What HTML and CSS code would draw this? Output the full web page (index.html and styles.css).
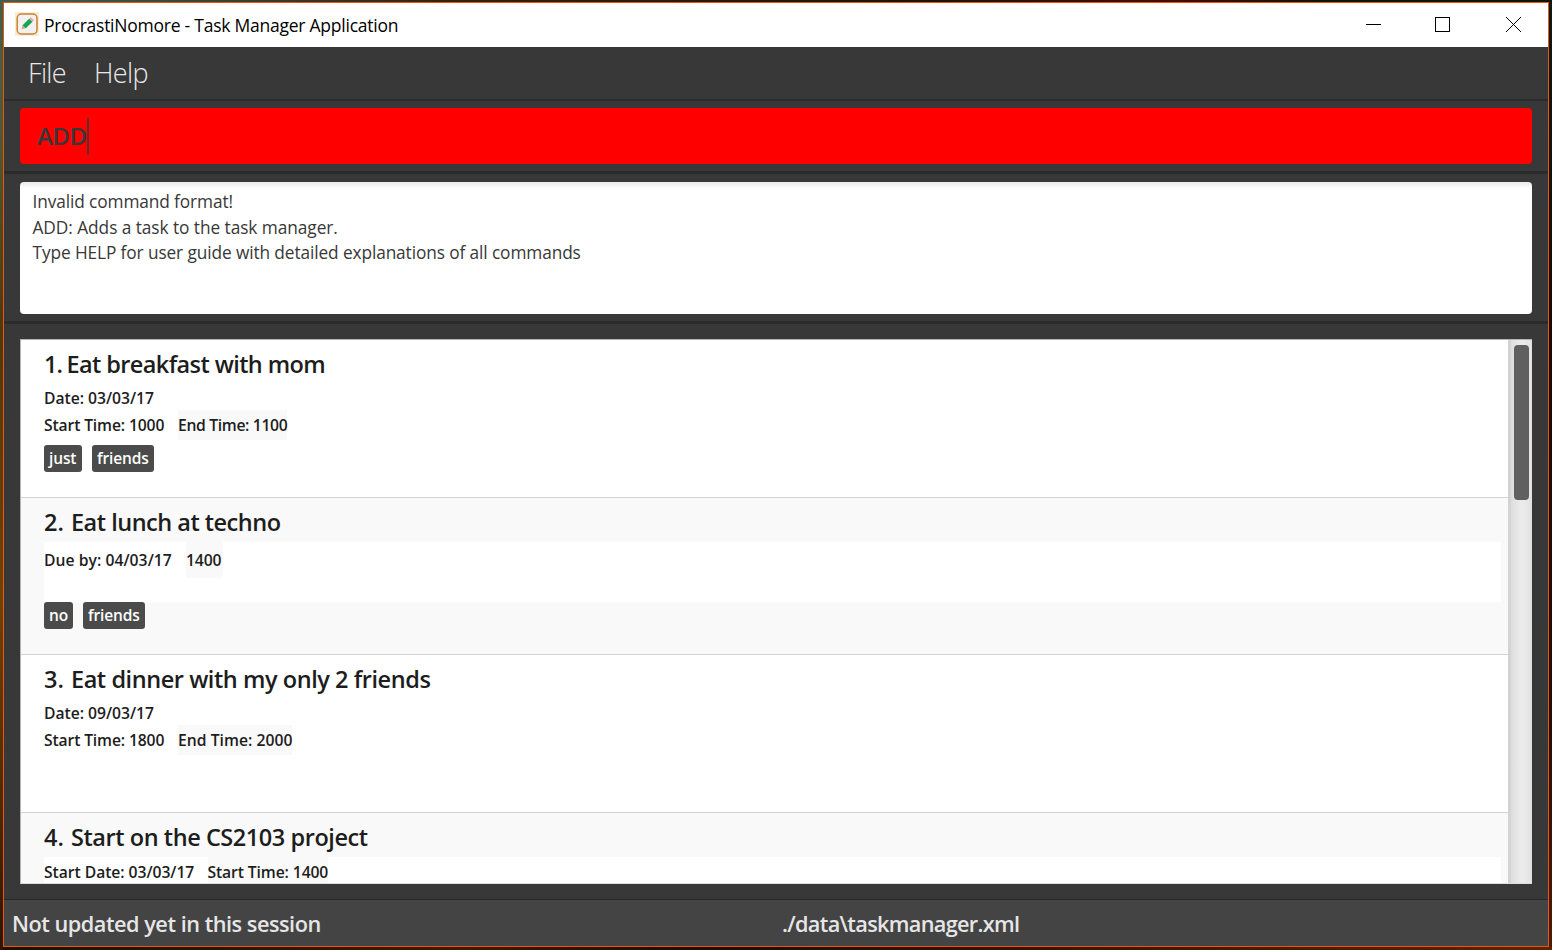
FILE: index.html
```html
<!DOCTYPE html>
<html lang="en">
<head>
<meta charset="utf-8">
<title>ProcrastiNomore - Task Manager Application</title>
<link rel="stylesheet" href="styles.css">
</head>
<body>
<div class="window">
  <header class="titlebar">
    <svg class="app-icon" width="24" height="24" viewBox="0 0 24 24">
      <rect width="24" height="24" fill="#fdecd2"/>
      <rect x="2.2" y="2" width="19.8" height="20" rx="4" fill="#f3f1ef" stroke="#cb7f37" stroke-width="1.5"/>
      <path d="M6.500 17.300 7.500 13.200 10.800 16.200Z" fill="#d9a878"/>
      <path d="M7.500 13.200 14.200 6.800 17.500 9.800 10.800 16.200Z" fill="#12a552"/>
      <path d="M14.200 6.800 15.800 5.300 19 8.300 17.500 9.800Z" fill="#f3a5a0"/>
    </svg>
    <span class="app-title">ProcrastiNomore - Task Manager Application</span>
    <svg class="controls" width="160" height="20" viewBox="0 0 160 20" fill="none" stroke="#000" shape-rendering="crispEdges">
      <path d="M0 9.500H15"/>
      <rect x="69.500" y="2.500" width="14" height="14"/>
      <path d="M140 2 155 17M155 2 140 17" shape-rendering="auto"/>
    </svg>
  </header>
  <nav class="menubar"><span class="menu-item">File</span><span class="menu-item">Help</span></nav>
  <section class="command-pane">
    <div class="command-box"><span class="command-text">ADD</span><span class="caret"></span></div>
  </section>
  <section class="result-pane">
    <div class="result-box">
      <p>Invalid command format!</p>
      <p class="usage">ADD: Adds a task to the task manager.</p>
      <p>Type HELP for user guide with detailed explanations of all commands</p>
    </div>
  </section>
  <section class="list-pane">
    <div class="list">
      <div class="rows">
        <article class="task">
          <h2 class="name name-tight"><span class="num">1. </span>Eat breakfast with mom</h2>
          <div class="details">
            <div class="line date"><span>Date: 03/03/17</span></div>
            <div class="line time"><span class="start">Start Time: 1000</span><span class="shade end">End Time: 1100</span></div>
          </div>
          <div class="tags"><span class="tag tag-just">just</span><span class="tag">friends</span></div>
        </article>
        <article class="task alt">
          <h2 class="name name-snug"><span class="num">2. </span>Eat lunch at techno</h2>
          <div class="details">
            <div class="line due"><span class="due-date">Due by: 04/03/17</span><span class="shade due-time">1400</span></div>
          </div>
          <div class="tags"><span class="tag">no</span><span class="tag">friends</span></div>
        </article>
        <article class="task">
          <h2 class="name"><span class="num">3. </span>Eat dinner with my only 2 friends</h2>
          <div class="details">
            <div class="line date"><span>Date: 09/03/17</span></div>
            <div class="line time"><span class="start">Start Time: 1800</span><span class="shade end-wide">End Time: 2000</span></div>
          </div>
        </article>
        <article class="task alt">
          <h2 class="name"><span class="num">4. </span>Start on the CS2103 project</h2>
          <div class="details">
            <div class="line time"><span class="start-date">Start Date: 03/03/17</span><span class="shade start-time">Start Time: 1400</span></div>
          </div>
        </article>
      </div>
      <div class="scrollbar"><div class="thumb"></div></div>
    </div>
  </section>
  <footer class="statusbar"><span class="sync">Not updated yet in this session</span><span class="path">./data\taskmanager.xml</span></footer>
</div>
</body>
</html>
```
FILE: styles.css
```css
* { box-sizing: border-box; }
body {
  margin: 0;
  height: 950px;
  padding: 2px 3px 3px 3px;
  overflow: hidden;
  font-family: "Open Sans", "Noto Sans", sans-serif;
  background:
    linear-gradient(#40604f 0, #4a5a36 140px, #4a3a10 330px, #6b4306 600px, #4a2c05 800px, #2a1802 950px) left / 3px 100% no-repeat,
    linear-gradient(90deg, #1a1202, #3a1a02 30%, #1c0d05 45%, #381602 70%, #5a2400) bottom / 100% 3px no-repeat,
    linear-gradient(90deg, #40604f, #35200c 30%, #1c1408 60%, #4a0c05 75%, #101508 85%) top / 100% 2px no-repeat,
    linear-gradient(#0c1c12, #150c02 300px, #1c0f02 700px, #4a1d00) right / 3px 100% no-repeat,
    #1a1005;
}
.window {
  width: 1546px;
  height: 945px;
  border: 1px solid #f4520c;
  background: #383838;
  display: flex;
  flex-direction: column;
}
.window > * { flex-shrink: 0; }
.titlebar {
  height: 44px;
  background: #fff;
  display: flex;
  align-items: flex-start;
  color: #000;
}
.app-icon { margin: 9px 0 0 11px; }
.app-title { margin-left: 5px; font-size: 17.5px; line-height: 45px; letter-spacing: -0.24px; white-space: nowrap; }
.controls { margin: 12px 22px 0 auto; }
.menubar {
  height: 54px;
  padding-left: 24px;
  display: flex;
  gap: 28px;
  border-bottom: 2px solid #2c2c2c;
  font-size: 27px;
  font-weight: 300;
  line-height: 52px;
  color: #e8e8e8;
}
.menu-item { letter-spacing: -0.65px; }
.command-pane { height: 73px; padding: 7px 16px 0 16px; border-bottom: 3px solid #2b2b2b; }
.command-box {
  height: 56px;
  padding-left: 17px;
  border-radius: 4px;
  background: #f00;
  display: flex;
  align-items: center;
  font-size: 24px;
  font-weight: 600;
  color: #383838;
}
.command-text { width: 50px; height: 34px; line-height: 33px; letter-spacing: -0.5px; white-space: nowrap; }
.caret { width: 2px; height: 37px; background: #383838; opacity: .8; }
.result-pane { height: 150px; padding: 8px 16px 0 16px; border-bottom: 3px solid #2b2b2b; }
.result-box {
  height: 132px;
  padding: 7px 12.5px;
  border-radius: 4px;
  background: linear-gradient(#ececec, #f3f3f3 3px, #fff 6px);
  font-size: 17.3px;
  line-height: 25.5px;
  color: #383838;
}
.result-box p { margin: 0; white-space: nowrap; letter-spacing: -0.11px; }
.result-box .usage { letter-spacing: -0.06px; }
.list-pane { height: 575px; padding: 15px 16px 0 16px; }
.list {
  height: 545px;
  border: 1px solid #b4b4b4;
  border-right: 0;
  border-bottom-color: #ddd;
  background: #fff;
  display: flex;
  overflow: hidden;
}
.rows { flex: 1; overflow: hidden; }
.task {
  height: 157.5px;
  padding: 8px 7px 0 23px;
  border-bottom: 1px solid #d2d2d2;
  background: #fff;
  color: #1d1d1d;
}
.task.alt { background: #f9f9f9; }
.name { margin: 0; height: 36.5px; line-height: 33.5px; font-size: 23.5px; font-weight: 600; letter-spacing: -0.44px; white-space: nowrap; }
.name-snug { letter-spacing: -0.5px; }
.name-tight { letter-spacing: -0.6px; }
.num { display: inline-block; width: 27px; letter-spacing: 0; }
.name-tight .num { width: 22.5px; letter-spacing: -1px; }
.details { height: 60px; background: #fff; font-size: 15.7px; font-weight: 600; letter-spacing: -0.14px; }
.line { display: flex; white-space: nowrap; }
.date { height: 25.5px; line-height: 27px; letter-spacing: -0.03px; }
.time { height: 30px; line-height: 30px; }
.due { height: 36px; line-height: 36px; letter-spacing: 0.04px; }
.start { width: 134px; }
.start-date { width: 163.5px; letter-spacing: -0.05px; }
.due-date { width: 142px; }
.shade { background: #f9f9f9; }
.end { letter-spacing: -0.34px; }
.end-wide { letter-spacing: 0.03px; }
.start-time { letter-spacing: -0.11px; }
.due-time { width: 37px; letter-spacing: -0.1px; }
.tags { display: flex; gap: 10px; }
.tag {
  height: 27px;
  padding: 0 5px;
  border-radius: 3px;
  background: #4b4b4b;
  color: #fff;
  font-size: 15.5px;
  font-weight: 600;
  line-height: 27px;
  letter-spacing: -0.14px;
}
.tag-just { width: 38px; }
.scrollbar {
  width: 24px;
  padding: 5px 3px 0 6px;
  background: linear-gradient(90deg, #d3d3d3 0 3px, #dedede 3px, #ececec 14px, #e2e2e2);
}
.thumb { height: 155px; border-radius: 4px; background: #606060; }
.statusbar {
  flex: 1;
  display: flex;
  padding-left: 8px;
  border-top: 1px solid #282828;
  background: #444;
  color: #e6e6e6;
  font-size: 21.7px;
  font-weight: 600;
  line-height: 48px;
  white-space: nowrap;
  min-height: 0;
}
.sync { width: 770px; letter-spacing: -0.48px; }
.path { letter-spacing: -0.68px; }
```
